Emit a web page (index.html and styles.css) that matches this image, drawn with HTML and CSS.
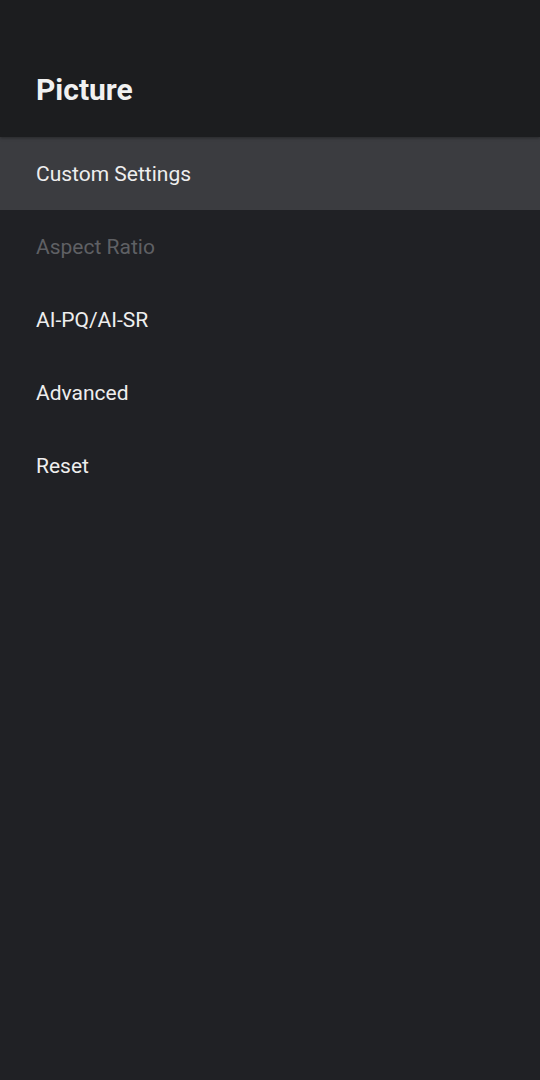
FILE: index.html
```html
<!DOCTYPE html>
<html>
<head>
<meta charset="utf-8">
<link rel="stylesheet" href="styles.css">
</head>
<body>
<div class="screen">
  <header class="header">
    <h1 class="title">Picture</h1>
  </header>
  <ul class="menu">
    <li class="item selected">Custom Settings</li>
    <li class="item disabled">Aspect Ratio</li>
    <li class="item">AI-PQ/AI-SR</li>
    <li class="item">Advanced</li>
    <li class="item">Reset</li>
  </ul>
</div>
</body>
</html>
```
FILE: styles.css
```css
html, body {
  margin: 0;
  padding: 0;
  background: #202125;
}
.screen {
  width: 540px;
  height: 1080px;
  background: #202125;
  font-family: Roboto, "Noto Sans", sans-serif;
  display: flex;
  flex-direction: column;
}
.header {
  height: 137px;
  background: #1c1d1f;
  padding: 72px 0 0 36px;
  box-sizing: border-box;
  box-shadow: 0 1px 3px rgba(0,0,0,0.35);
  position: relative;
  z-index: 1;
}
.title {
  margin: 0;
  font-size: 30px;
  line-height: 35px;
  font-weight: 700;
  color: #f1f1f1;
}
.menu {
  list-style: none;
  margin: 0;
  padding: 0;
}
.item {
  height: 73px;
  display: flex;
  align-items: center;
  padding-left: 36px;
  font-size: 21px;
  color: #eeeeee;
}
.item.selected {
  background: #3b3c40;
}
.item.disabled {
  color: #5f6064;
}
```
